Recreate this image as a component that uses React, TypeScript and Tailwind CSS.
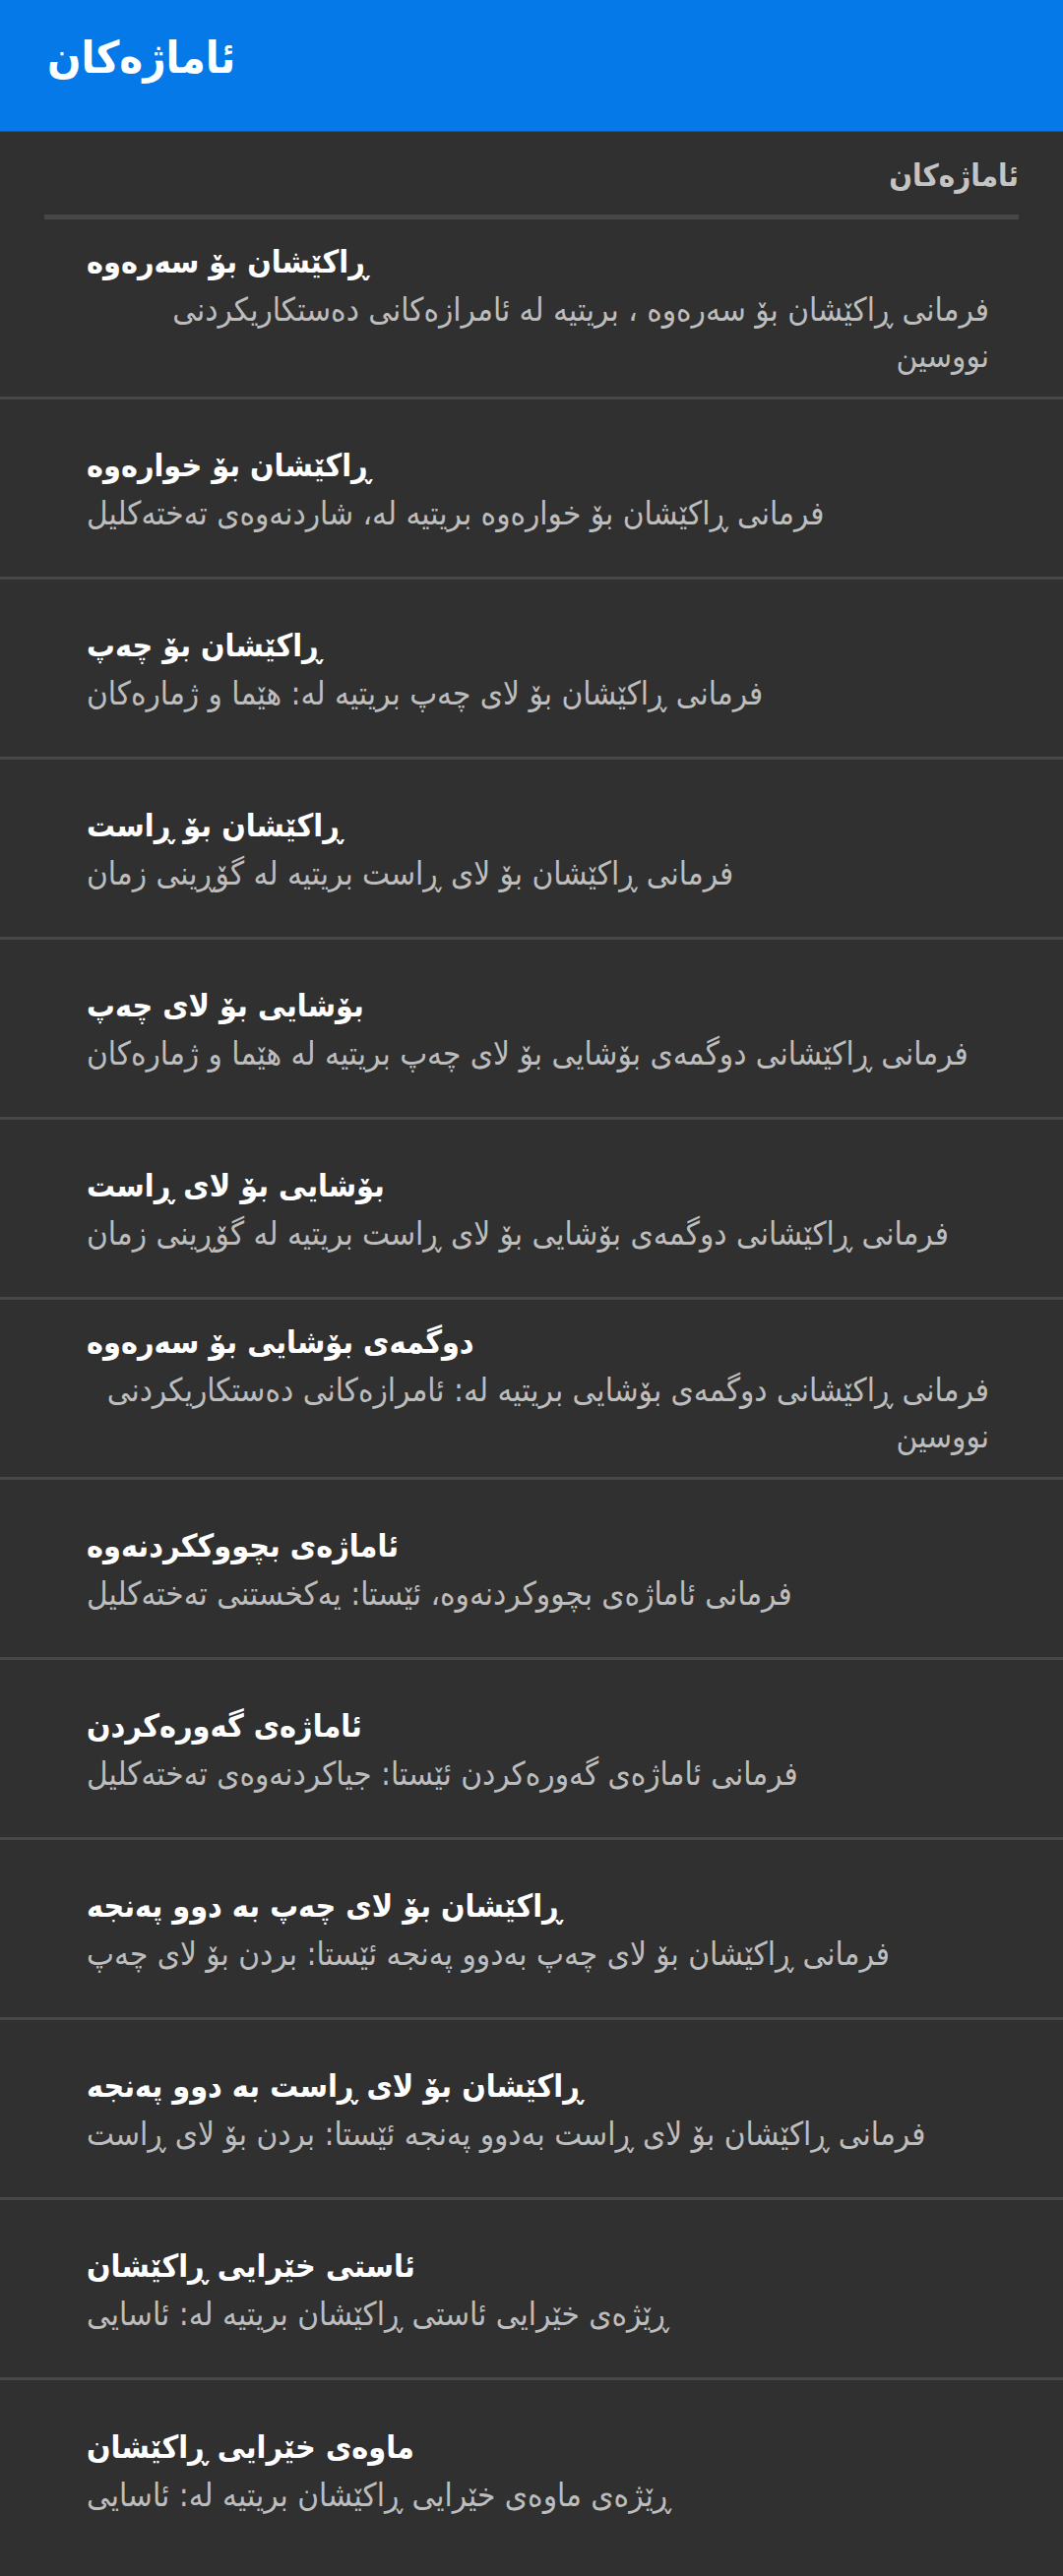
import React from "react";

const items: { title: string; desc: string }[] = [
  {
    title: "ڕاکێشان بۆ سەرەوە",
    desc: "فرمانی ڕاکێشان بۆ سەرەوە ، بریتیە لە ئامرازەکانی دەستکاریکردنی نووسین",
  },
  {
    title: "ڕاکێشان بۆ خوارەوە",
    desc: "فرمانی ڕاکێشان بۆ خوارەوە بریتیە لە، شاردنەوەی تەختەکلیل",
  },
  {
    title: "ڕاکێشان بۆ چەپ",
    desc: "فرمانی ڕاکێشان بۆ لای چەپ بریتیە لە: هێما و ژمارەکان",
  },
  {
    title: "ڕاکێشان بۆ ڕاست",
    desc: "فرمانی ڕاکێشان بۆ لای ڕاست بریتیە لە گۆڕینی زمان",
  },
  {
    title: "بۆشایی بۆ لای چەپ",
    desc: "فرمانی ڕاکێشانی دوگمەی بۆشایی بۆ لای چەپ بریتیە لە هێما و ژمارەکان",
  },
  {
    title: "بۆشایی بۆ لای ڕاست",
    desc: "فرمانی ڕاکێشانی دوگمەی بۆشایی بۆ لای ڕاست بریتیە لە گۆڕینی زمان",
  },
  {
    title: "دوگمەی بۆشایی بۆ سەرەوە",
    desc: "فرمانی ڕاکێشانی دوگمەی بۆشایی بریتیە لە: ئامرازەکانی دەستکاریکردنی نووسین",
  },
  {
    title: "ئاماژەی بچووککردنەوە",
    desc: "فرمانی ئاماژەی بچووکردنەوە، ئێستا: یەکخستنی تەختەکلیل",
  },
  {
    title: "ئاماژەی گەورەکردن",
    desc: "فرمانی ئاماژەی گەورەکردن ئێستا: جیاکردنەوەی تەختەکلیل",
  },
  {
    title: "ڕاکێشان بۆ لای چەپ بە دوو پەنجە",
    desc: "فرمانی ڕاکێشان بۆ لای چەپ بەدوو پەنجە ئێستا: بردن بۆ لای چەپ",
  },
  {
    title: "ڕاکێشان بۆ لای ڕاست بە دوو پەنجە",
    desc: "فرمانی ڕاکێشان بۆ لای ڕاست بەدوو پەنجە ئێستا: بردن بۆ لای ڕاست",
  },
  {
    title: "ئاستی خێرایی ڕاکێشان",
    desc: "ڕێژەی خێرایی ئاستی ڕاکێشان بریتیە لە: ئاسایی",
  },
  {
    title: "ماوەی خێرایی ڕاکێشان",
    desc: "ڕێژەی ماوەی خێرایی ڕاکێشان بریتیە لە: ئاسایی",
  },
];

export default function App() {
  return (
    <div className="min-h-[2618px] w-[1080px] bg-[#303030] font-['DejaVu_Sans_Condensed','DejaVu_Sans',sans-serif]">
      <header className="flex h-[134px] items-center border-b border-[#0a5db3] bg-[#0679e9] pb-[16px] pl-[48px]">
        <h1 dir="rtl" className="text-[45px] font-bold leading-none text-white">
          ئاماژەکان
        </h1>
      </header>

      <section className="px-[45px] pt-[20px]">
        <div dir="rtl" className="pb-[16px] text-right text-[31px] font-bold leading-[48px] text-[#c4c4c4]">
          ئاماژەکان
        </div>
        <div className="h-[5px] bg-[#474747]" />
      </section>

      <ul>
        {items.map((it, i) => (
          <li
            key={i}
            className={`flex min-h-[183px] flex-col items-start justify-center pl-[88px] pr-[75px] ${
              i < items.length - 1 ? "border-b-[3px] border-[#474747]" : ""
            }`}
          >
            <div dir="rtl" className="w-fit max-w-full text-[32px] font-bold leading-[50px] text-white">
              {it.title}
            </div>
            <div dir="rtl" className="w-fit max-w-full text-[33px] leading-[47px] text-[#bdbdbd]">
              {it.desc}
            </div>
          </li>
        ))}
      </ul>
    </div>
  );
}
